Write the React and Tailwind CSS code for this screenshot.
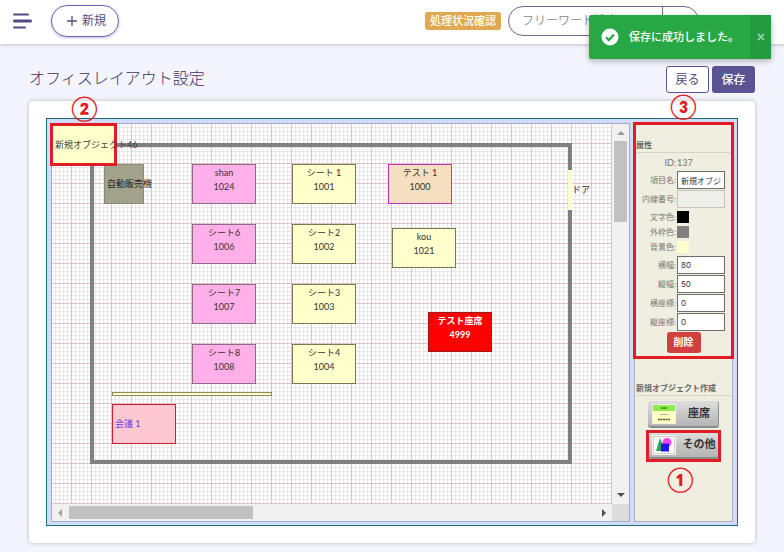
const seats = [
  { name: "shan", no: "1024", box: "left-[140px] top-[40px] border-[#8d6b88] bg-[#ffb0e8]" },
  { name: "シート6", no: "1006", box: "left-[140px] top-[100px] border-[#8d6b88] bg-[#ffb0e8]" },
  { name: "シート7", no: "1007", box: "left-[140px] top-[160px] border-[#8d6b88] bg-[#ffb0e8]" },
  { name: "シート8", no: "1008", box: "left-[140px] top-[220px] border-[#8d6b88] bg-[#ffb0e8]" },
  { name: "シート 1", no: "1001", box: "left-[240px] top-[40px] border-[#78785a] bg-[#ffffcc]" },
  { name: "シート2", no: "1002", box: "left-[240px] top-[100px] border-[#78785a] bg-[#ffffcc]" },
  { name: "シート3", no: "1003", box: "left-[240px] top-[160px] border-[#78785a] bg-[#ffffcc]" },
  { name: "シート4", no: "1004", box: "left-[240px] top-[220px] border-[#78785a] bg-[#ffffcc]" },
  { name: "テスト 1", no: "1000", box: "left-[336px] top-[40px] border-[#c432c0] bg-[#f5dfc0]" },
  { name: "kou", no: "1021", box: "left-[340px] top-[104px] border-[#78785a] bg-[#ffffcc]" },
  { name: "テスト座席", no: "4999", box: "left-[376px] top-[188px] border-[#a01818] bg-[#ff0000] font-bold text-white" },
];

function Mark({ children, className }) {
  return (
    <span className={`pointer-events-none absolute z-10 text-[24px] leading-[24px] font-bold text-[#e21c24] ${className}`}>
      {children}
    </span>
  );
}

function Field({ id, label, children }) {
  return (
    <div className="flex items-center gap-px">
      <label htmlFor={id} className="w-10 shrink-0 text-right text-[8px] leading-3 whitespace-nowrap text-[#777770]">
        {label}:
      </label>
      {children}
    </div>
  );
}

function TextField({ id, label, value, disabled }) {
  return (
    <Field id={id} label={label}>
      <input
        id={id}
        defaultValue={value}
        disabled={disabled}
        className="h-[18px] w-12 min-w-0 border border-[#6e6e68] bg-white px-[3px] font-['Inter','Noto_Sans_CJK_JP',sans-serif] text-[8px] text-[#333] disabled:border-[#c4c4ba] disabled:bg-[#efefea]"
      />
    </Field>
  );
}

function Swatch({ id, label, color }) {
  return (
    <Field id={id} label={label}>
      <button id={id} type="button" className={`size-3 ${color}`} />
    </Field>
  );
}

function Arrow({ d, className }) {
  return (
    <svg viewBox="0 0 8 8" className={`size-2 shrink-0 ${className}`} aria-hidden="true">
      <path d={d} fill="currentColor" />
    </svg>
  );
}

function Header() {
  return (
    <header className="relative flex h-[45px] items-center border-b border-[#d3d3dc] bg-white pr-[85px] pb-[2px] pl-[13px] shadow-[0_1px_3px_rgba(0,0,0,0.12)]">
      <button type="button" aria-label="menu" className="text-[#514b83]">
        <svg viewBox="0 0 20 16" className="h-4 w-5" aria-hidden="true">
          <path d="M1 1.5h14M1 14.5h11" fill="none" stroke="currentColor" strokeWidth="2" strokeLinecap="round" />
          <path d="M1.5 8h16" stroke="currentColor" strokeWidth="3" strokeLinecap="round" />
        </svg>
      </button>
      <button type="button" className="ml-[18px] flex h-8 w-[68px] items-center justify-center gap-1 rounded-full border border-[#6c63a8] pl-[2px] text-xs text-[#514b83] shadow-[0_1px_3px_rgba(90,80,180,0.4)]">
        <svg viewBox="0 0 12 12" className="size-3" aria-hidden="true">
          <path d="M6 1v10M1 6h10" stroke="currentColor" strokeWidth="1.3" />
        </svg>
        新規
      </button>
      <a href="#status" className="ml-auto rounded-[3px] bg-[#e0a850] px-[5px] text-[11px] leading-[18px] font-medium text-white">
        処理状況確認
      </a>
      <form className="ml-[7px] flex h-[30px] w-[191px] rounded-full border border-[#6b6896]">
        <input aria-label="検索" placeholder="フリーワード検索" className="min-w-0 flex-1 pl-[13px] text-xs placeholder:text-[#99999f]" />
        <button type="button" aria-label="search" className="flex w-9 items-center justify-center border-l border-[#6b6896] text-[#6b6896]">
          <svg viewBox="0 0 12 12" className="size-3" aria-hidden="true">
            <path d="M8.5 8.5L11 11M9 5A4 4 0 1 1 1 5a4 4 0 0 1 8 0z" fill="none" stroke="currentColor" />
          </svg>
        </button>
      </form>
    </header>
  );
}

function Toast() {
  return (
    <div role="status" className="absolute top-[15px] right-[13px] z-20 flex h-11 w-[182px] items-center rounded-[2px] bg-[#28a745] text-white shadow-[0_2px_6px_rgba(0,0,0,0.3)]">
      <svg viewBox="0 0 18 18" className="ml-3 size-[18px]" aria-hidden="true">
        <circle cx="9" cy="9" r="8.5" fill="#fff" />
        <path d="M5 9.3l2.8 2.8L13 6.5" fill="none" stroke="#28a745" strokeWidth="2.2" />
      </svg>
      <span className="ml-[10px] flex-1 text-[11px] font-medium whitespace-nowrap">保存に成功しました。</span>
      <button type="button" aria-label="close" className="flex h-full w-[21px] items-center justify-center bg-[#259b40] text-[#8fd09e]">
        <svg viewBox="0 0 8 8" className="size-2" aria-hidden="true">
          <path d="M1 1l6 6M7 1L1 7" stroke="currentColor" strokeWidth="1.8" />
        </svg>
      </button>
    </div>
  );
}

function Canvas() {
  return (
    <div className="relative min-w-0 flex-1 border border-[#a9a9cc] bg-[#f1f1f1]">
      <div className="flex">
        <div className="relative h-[380px] min-w-0 flex-1 overflow-hidden bg-white text-[9px] leading-[14px] text-[#333]">
          <svg className="absolute inset-0 size-full" aria-hidden="true">
            <defs>
              <pattern id="grid" width="20" height="20" patternUnits="userSpaceOnUse">
                <path d="M3.5 0v20M7.5 0v20M11.5 0v20M15.5 0v20M0 3.5h20M0 7.5h20M0 11.5h20M0 15.5h20" stroke="#e8e6e8" />
                <path d="M19.5 0v20M0 19.5h20" stroke="#e0c0c8" />
              </pattern>
            </defs>
            <rect width="100%" height="100%" fill="url(#grid)" />
          </svg>
          <div className="absolute top-[19px] left-[38px] h-[321px] w-[482px] border-4 border-[#808080]" />
          <div className="absolute top-[46px] left-[516px] flex h-10 w-1 items-center bg-[#ffffcc] pl-1 whitespace-nowrap">ドア</div>
          <div className="absolute top-[40px] left-[52px] flex size-10 items-center border border-[#8a8a78] bg-[#a3a38c] pl-[2px] whitespace-nowrap text-[#222]">
            自動販売機
          </div>
          {seats.map((s) => (
            <div key={s.no} className={`absolute h-10 w-16 border pt-px text-center ${s.box}`}>
              <div>{s.name}</div>
              <div>{s.no}</div>
            </div>
          ))}
          <div className="absolute top-[268px] left-[60px] h-1 w-40 border border-[#8a8a60] bg-[#ffffcc]" />
          <div className="absolute top-[280px] left-[60px] flex h-10 w-16 items-center border border-[#c4242c] bg-[#ffc8d0] pl-[2px] text-[#6a3fe0]">
            会議 1
          </div>
        </div>
        <div className="flex w-[17px] flex-col items-center py-[5px]">
          <Arrow d="M4 2l4 4H0z" className="text-[#9a9a9a]" />
          <div className="mt-1 h-[81px] w-[13px] bg-[#c1c1c1]" />
          <Arrow d="M0 2h8L4 6z" className="mt-auto text-[#505050]" />
        </div>
      </div>
      <div className="flex h-[17px] items-center">
        <div className="flex flex-1 items-center pr-1 pl-1">
          <Arrow d="M6 0v8L2 4z" className="text-[#a3a3a3]" />
          <div className="ml-[5px] h-[13px] w-[184px] bg-[#c1c1c1]" />
          <Arrow d="M2 0v8l4-4z" className="ml-auto text-[#505050]" />
        </div>
        <div className="h-full w-[17px] bg-[#dcdcdc]" />
      </div>
      <div className="absolute -top-px -left-[2px] flex h-[43px] w-[67px] items-center border-[3px] border-[#e21c24] bg-[#ffffcc] pl-[2px] text-[9px] whitespace-nowrap text-[#444]">
        新規オブジェクト46
      </div>
      <Mark className="-top-7 left-[19px]">②</Mark>
    </div>
  );
}

function ToolButton({ label, children }) {
  return (
    <button type="button" className="flex h-[27px] w-[71px] items-center gap-1 rounded-[3px] border-r border-b-2 border-[#8c8c8c] bg-gradient-to-b from-[#dedede] to-[#b4b4b4] pl-1 text-[11px] font-bold text-[#333]">
      <svg viewBox="0 0 24 20" className="h-5 w-6 shrink-0" aria-hidden="true">
        {children}
      </svg>
      <span className="flex-1 text-center whitespace-nowrap">{label}</span>
    </button>
  );
}

function Sidebar() {
  return (
    <aside className="w-[99px] shrink-0 border border-[#b0b0b8] bg-[#efeee0]">
      <section className="relative h-[235px] px-px pt-[15px]">
        <h2 className="border-b border-[#d4d4c4] text-[8px] leading-[13px] font-bold text-[#666]">属性</h2>
        <div className="mt-[2px] flex flex-col gap-px">
          <div className="flex gap-px text-[9px] leading-[15px] text-[#777770]">
            <span className="w-10 text-right">ID:</span>137
          </div>
          <TextField id="name" label="項目名" value="新規オブジェクト46" />
          <TextField id="ext" label="内線番号" value="" disabled />
          <div className="flex flex-col gap-[3px] py-[2px]">
            <Swatch id="fg" label="文字色" color="bg-black" />
            <Swatch id="edge" label="外枠色" color="bg-[#808080]" />
            <Swatch id="bg" label="背景色" color="bg-[#ffffcc]" />
          </div>
          <TextField id="w" label="横幅" value="80" />
          <TextField id="h" label="縦幅" value="50" />
          <TextField id="x" label="横座標" value="0" />
          <TextField id="y" label="縦座標" value="0" />
          <button type="button" className="mx-auto h-[21px] w-[34px] rounded-[3px] bg-[#d0403c] text-[10px] font-bold text-white">
            削除
          </button>
        </div>
        <div className="pointer-events-none absolute -inset-x-[2px] -top-[2px] bottom-0 border-[3px] border-[#e21c24]" />
        <Mark className="-top-[30px] left-[35px]">③</Mark>
      </section>
      <section className="mt-[23px] px-px">
        <h2 className="border-b border-[#d4d4c4] text-[8px] leading-[13px] font-bold whitespace-nowrap text-[#666]">新規オブジェクト作成</h2>
        <div className="mt-[5px] flex flex-col gap-1 pl-3">
          <ToolButton label="座席">
            <rect width="24" height="20" fill="#f2f2e4" />
            <rect x="1" y="1" width="22" height="18" fill="#ffffc0" />
            <rect x="1" y="1" width="22" height="6" fill="#8cec4c" />
            <path d="M9 4h6" stroke="#2f7a1c" strokeWidth="1.6" strokeDasharray="2 .4" />
            <path d="M8 10.5h8" stroke="#a0a088" strokeWidth="1.2" strokeDasharray="1.5 .6" />
            <path d="M6 15.5h12" stroke="#55553c" strokeWidth="1.6" strokeDasharray="2 .6" />
          </ToolButton>
          <div className="relative">
            <ToolButton label="その他">
              <rect width="24" height="20" fill="#f6f6f2" />
              <rect x="1.5" y="1.5" width="21" height="17" fill="#f8f8f8" stroke="#d0d0cc" />
              <circle cx="15" cy="7.5" r="4.5" fill="#f648e8" />
              <path d="M8 3l5 13H4z" fill="#22a868" />
              <rect x="9" y="8.5" width="8" height="8" fill="#2418e0" />
            </ToolButton>
            <div className="pointer-events-none absolute -top-[2px] -bottom-[3px] -left-[2px] w-[75px] border-[3px] border-[#e21c24]" />
            <Mark className="top-[35px] left-[19px]">①</Mark>
          </div>
        </div>
      </section>
    </aside>
  );
}

export default function App() {
  return (
    <div className="relative min-h-screen bg-[#f4f4fd] font-['Lato','Noto_Sans_CJK_JP',sans-serif]">
      <Header />
      <Toast />
      <main className="px-[29px] pb-[10px]">
        <div className="flex items-center justify-between pt-[21px] pb-2">
          <h1 className="pb-[3px] text-base font-light text-[#37345f]">オフィスレイアウト設定</h1>
          <div className="flex gap-[3px]">
            <button type="button" className="h-[27px] w-[43px] rounded-[3px] border border-[#5a5394] bg-white text-xs text-[#514b83]">戻る</button>
            <button type="button" className="h-[27px] w-[43px] rounded-[3px] bg-[#5a5394] text-xs font-medium text-white">保存</button>
          </div>
        </div>
        <div className="rounded-[4px] bg-white p-[17px] shadow-[0_0_4px_rgba(0,0,0,0.25)]">
          <div className="flex gap-1 border border-[#1c6c80] bg-[#d0dcfa] px-1 pt-1 pb-[3px]">
            <Canvas />
            <Sidebar />
          </div>
        </div>
      </main>
    </div>
  );
}
